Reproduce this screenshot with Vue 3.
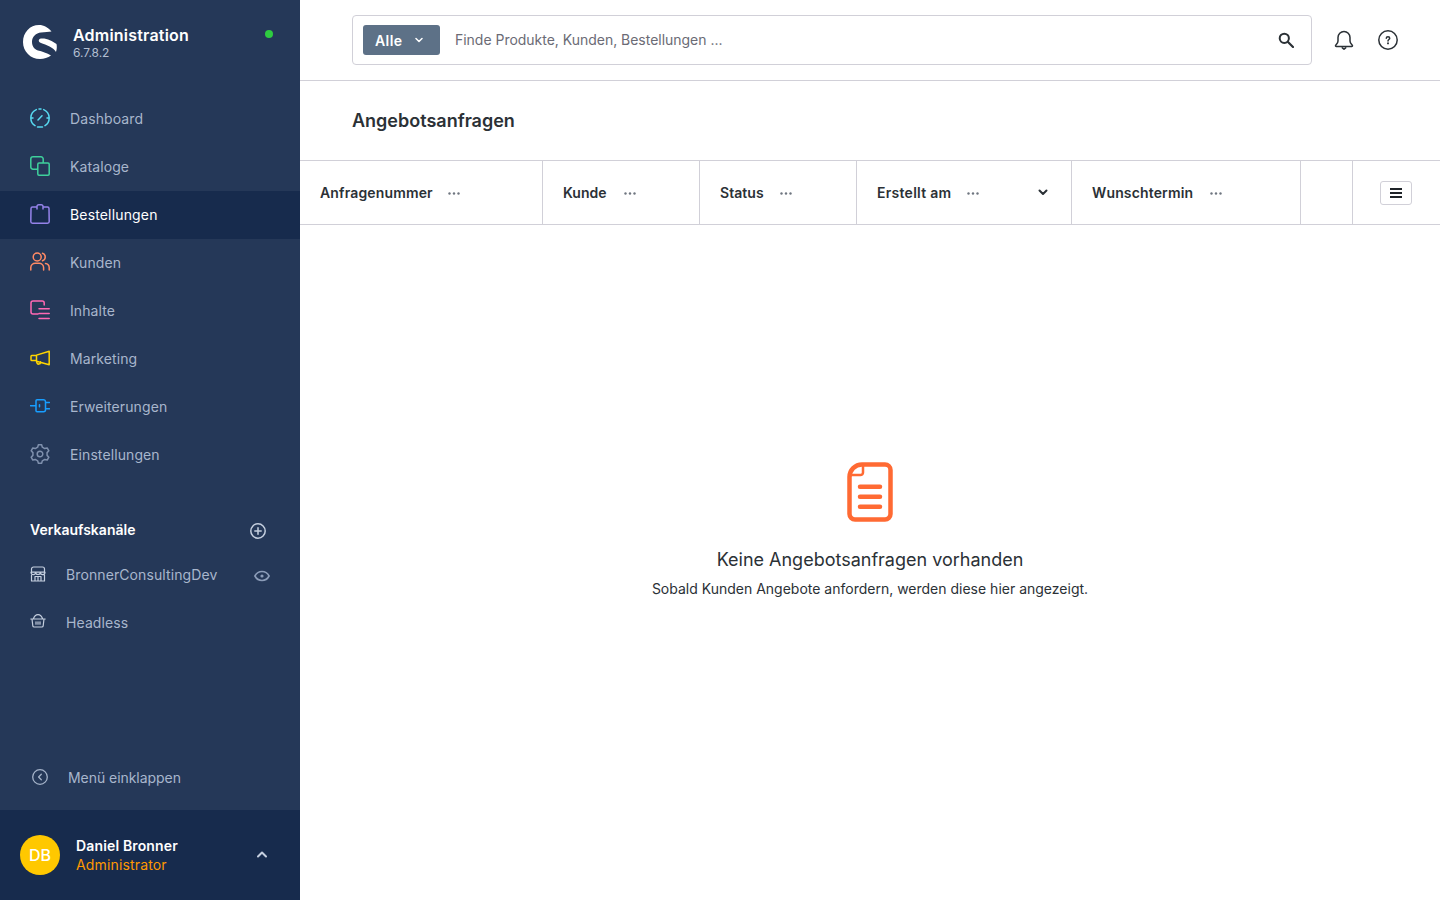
<script setup>
function gearPath() {
  const cx = 10, cy = 10, outer = 9.4, inner = 7.2
  const pts = []
  for (let i = 0; i < 6; i++) {
    const a = -90 + i * 60
    for (const [off, r] of [[-19, inner], [-10, outer], [10, outer], [19, inner]]) {
      const rad = ((a + off) * Math.PI) / 180
      pts.push((cx + r * Math.cos(rad)).toFixed(2) + ' ' + (cy + r * Math.sin(rad)).toFixed(2))
    }
  }
  return 'M' + pts.join('L') + 'ZM10 7.2a2.8 2.8 0 1 1 0 5.6 2.8 2.8 0 0 1 0-5.6Z'
}
const mainNav = [
  { label: 'Dashboard', color: '#57d9f0', d: 'M5 17.700A9.200 9.200 0 0 1 6.300 1.600M9 .9h2M13.700 1.600A9.200 9.200 0 0 1 15 17.700M7.500 18.900h5M8 12l4-4.200M3 10H1M19 10h-2' },
  { label: 'Kataloge', color: '#3fd09c', d: 'M9 .8H3A2.200 2.200 0 0 0 .8 3v8A2.200 2.200 0 0 0 3 13.200h4M13.200 7V3A2.200 2.200 0 0 0 11 .8H9M9 7h9a1.200 1.200 0 0 1 1.200 1.200V18a1.200 1.200 0 0 1-1.200 1.200H9A1.200 1.200 0 0 1 7.800 18V8.200A1.200 1.200 0 0 1 9 7Z' },
  { label: 'Bestellungen', color: '#9583ea', active: true, d: 'M7 3H2.500A1.500 1.500 0 0 0 1 4.500L.8 17.500A1.700 1.700 0 0 0 2.500 19.200h15a1.700 1.700 0 0 0 1.700-1.700L19 4.500A1.500 1.500 0 0 0 17.500 3H13M7 5V2.500A1.700 1.700 0 0 1 8.700.8h2.600A1.700 1.700 0 0 1 13 2.500V5' },
  { label: 'Kunden', color: '#ff8a65', d: 'M7.200 1a4 4 0 1 1 0 8 4 4 0 0 1 0-8ZM.8 18v-2.500a4.500 4.500 0 0 1 4.500-4.300h3.800a4.500 4.500 0 0 1 4.500 4.300V18M12.500 1.200a4 4 0 0 1 0 7.600M15.500 11.500a4.300 4.300 0 0 1 3.700 4V18' },
  { label: 'Inhalte', color: '#ff68b4', d: 'M14.200 5V3A2 2 0 0 0 12.200 1H3A2 2 0 0 0 1 3v9a2 2 0 0 0 2 2h5M9 8.800h10.200M9 13.500h10.200M9 18.500h10.200' },
  { label: 'Marketing', color: '#ffd500', d: 'M6.500 7.100 19.200 3.300v13.400L6.500 13.300ZM6.500 7.500H1.800A.8.8 0 0 0 1 8.300v3.400a.8.8 0 0 0 .8.8h4.700M6.500 13.300l.4 1.500a1.900 1.900 0 0 0 3.700-.4v-.6' },
  { label: 'Erweiterungen', color: '#189eff', d: 'M7 3.700h6.500a2 2 0 0 1 2 2v8a2 2 0 0 1-2 2H7a1 1 0 0 1-1-1v-10a1 1 0 0 1 1-1ZM.5 9.700H6M15.500 6.500h4M15.500 12.800h4M9.500 8.700v2' },
  { label: 'Einstellungen', color: '#7f90ad', d: gearPath() }
]
const channels = [
  { label: 'BronnerConsultingDev', eye: true, d: 'M1.500 6.500V3A2 2 0 0 1 3.500 1h9a2 2 0 0 1 2 2v3.500M1 6.200a2.300 2.300 0 0 0 4.700 0 2.300 2.300 0 0 0 4.600 0 2.300 2.300 0 0 0 4.700 0H1ZM1.500 9v6h13V9M5 15v-4.500h6V15M8 10.500V15' },
  { label: 'Headless', d: 'M.8 5h14.400M2 5l.8 6.800A1.400 1.400 0 0 0 4.200 13h7.600a1.400 1.400 0 0 0 1.400-1.200L14 5M3.300 5C4.300 2 6 .7 8 .7s3.700 1.300 4.700 4.300M6 7.800v2.400M8 7.800v2.400M10 7.800v2.400' }
]
const columns = [
  { label: 'Anfragenummer', w: 243, ls: 0.15, dm: 15 },
  { label: 'Kunde', w: 157, ls: 0, dm: 17 },
  { label: 'Status', w: 157, ls: 0.05, dm: 16 },
  { label: 'Erstellt am', w: 215, ls: 0.27, dm: 16, sort: true },
  { label: 'Wunschtermin', w: 229, ls: 0.15, dm: 17 }
]
</script>

<template>
  <div class="app">
    <aside class="sidebar">
      <div class="brand">
        <svg class="logo" width="34" height="34" viewBox="0 0 34 34">
          <path fill="#fff" d="M28.500 6.500C25 2.500 21 0 16 0 7 0 0 7.500 0 17s7.500 17 17 17c4 0 8-1.200 11-3.500-4-2.500-9-4-13-5-3.500-1-6-4.500-6-8.500 0-5.500 4-9 9-9.500 4-.4 7.500-.5 10.500-1Z" />
          <path fill="#fff" d="M18 13.500c-3 .5-3 3.500 0 4.500 5 1.500 13 5 15 9 1-3 1-6 .5-8-4.500-3-9.500-6-15.500-5.500Z" />
        </svg>
        <div class="brand-text">
          <div class="brand-title">Administration</div>
          <div class="brand-version">6.7.8.2</div>
        </div>
        <span class="status-dot"></span>
      </div>

      <nav class="nav">
        <a v-for="item in mainNav" :key="item.label" class="nav-item" :class="{ active: item.active }">
          <svg width="20" height="20" viewBox="0 0 20 20" fill="none" :stroke="item.color" stroke-width="1.500" stroke-linecap="round" stroke-linejoin="round"><path :d="item.d" /></svg>
          <span>{{ item.label }}</span>
        </a>
      </nav>

      <div class="section-head">
        <span>Verkaufskanäle</span>
        <svg width="16" height="16" viewBox="0 0 16 16" fill="none" stroke="#c5cfdf" stroke-width="1.500" stroke-linecap="round"><circle cx="8" cy="8" r="7.200" /><path d="M8 4.800v6.400M4.800 8h6.400" /></svg>
      </div>

      <a v-for="c in channels" :key="c.label" class="channel">
        <svg width="16" height="16" viewBox="0 0 16 16" fill="none" stroke="#c5cfdf" stroke-width="1.200" stroke-linecap="round" stroke-linejoin="round"><path :d="c.d" /></svg>
        <span class="channel-label">{{ c.label }}</span>
        <svg v-if="c.eye" class="eye" width="16" height="12" viewBox="0 0 16 12" fill="none" stroke="#8b9cb8" stroke-width="1.600"><path d="M.9 6C2.500 3 5 1.500 8 1.500S13.500 3 15.100 6C13.500 9 11 10.500 8 10.500S2.500 9 .9 6Z" /><circle cx="8" cy="6" r="1.600" fill="#8b9cb8" stroke="none" /></svg>
      </a>

      <div class="spacer"></div>

      <a class="collapse">
        <svg width="16" height="16" viewBox="0 0 16 16" fill="none" stroke="#a5b3c9" stroke-width="1.300" stroke-linecap="round" stroke-linejoin="round"><circle cx="8" cy="8" r="7.300" /><path d="M9.300 5.300 6.600 8l2.700 2.700" /></svg>
        <span>Menü einklappen</span>
      </a>

      <div class="user">
        <div class="avatar">DB</div>
        <div class="user-text">
          <div class="user-name">Daniel Bronner</div>
          <div class="user-role">Administrator</div>
        </div>
        <svg class="user-caret" width="10" height="7" viewBox="0 0 10 7" fill="none" stroke="#c5cfdf" stroke-width="2" stroke-linecap="round" stroke-linejoin="round"><path d="M1 5.500 5 1.500l4 4" /></svg>
      </div>
    </aside>

    <main class="main">
      <header class="topbar">
        <div class="search">
          <button class="search-type">
            <span>Alle</span>
            <svg width="8" height="6" viewBox="0 0 8 6" fill="none" stroke="#fff" stroke-width="1.500" stroke-linecap="round" stroke-linejoin="round"><path d="M1 1.500 4 4.500l3-3" /></svg>
          </button>
          <span class="placeholder">Finde Produkte, Kunden, Bestellungen ...</span>
          <svg class="search-icon" width="16" height="16" viewBox="0 0 16 16" fill="none" stroke="#2b3136" stroke-linecap="round"><circle cx="6.300" cy="6.300" r="4.600" stroke-width="2" /><path d="m10 10 5 5" stroke-width="2.200" /></svg>
        </div>
        <svg class="bell" width="20" height="20" viewBox="0 0 20 20" fill="none" stroke="#2b3136" stroke-width="1.500" stroke-linejoin="round" stroke-linecap="round"><path d="M1.500 15.800c0-1 2.500-2 2.500-4.800V7.500a6 6 0 0 1 12 0V11c0 2.800 2.500 3.800 2.500 4.800 0 .4-.3.700-.7.700H2.200a.7.700 0 0 1-.7-.7Z" /><path d="M8.300 17.800 10 19.200l1.700-1.400" /></svg>
        <svg class="help" width="20" height="20" viewBox="0 0 20 20" fill="none" stroke="#2b3136" stroke-width="1.500" stroke-linecap="round" stroke-linejoin="round"><circle cx="10" cy="10" r="9.200" /><path d="M8.300 8.300C8.300 7.300 9 6.700 10 6.700s1.700.6 1.700 1.500c0 1.300-1.700 1.300-1.700 2.700" stroke-width="1.500" /><path d="M10 13.300v.1" stroke-width="1.900" /></svg>
      </header>

      <div class="page-head">Angebotsanfragen</div>

      <div class="table-head">
        <div v-for="col in columns" :key="col.label" class="th" :style="{ width: col.w + 'px' }">
          <span class="th-label" :style="{ letterSpacing: col.ls + 'px' }">{{ col.label }}</span>
          <svg class="dots" :style="{ marginLeft: col.dm + 'px' }" width="12" height="3" viewBox="0 0 12 3" fill="#6f7680"><circle cx="1.500" cy="1.500" r="1.200" /><circle cx="6" cy="1.500" r="1.200" /><circle cx="10.500" cy="1.500" r="1.200" /></svg>
          <svg v-if="col.sort" class="sort" width="10" height="7" viewBox="0 0 10 7" fill="none" stroke="#2b3136" stroke-width="2" stroke-linecap="round" stroke-linejoin="round"><path d="M1.500 1.500 5 5l3.500-3.500" /></svg>
        </div>
        <div class="th th-empty"></div>
        <div class="th-settings">
          <button class="list-btn">
            <svg width="12" height="10" viewBox="0 0 12 10" fill="none" stroke="#1f2328" stroke-width="2"><path d="M0 1h12M0 5h12M0 9h12" /></svg>
          </button>
        </div>
      </div>

      <section class="empty">
        <svg width="46" height="60" viewBox="0 0 46 60" fill="none" stroke="#ff6a33" stroke-linecap="round" stroke-linejoin="round">
          <path stroke-width="4.500" d="M15 2.500h23a5.500 5.500 0 0 1 5.500 5.500v44a5.500 5.500 0 0 1-5.500 5.500H8A5.500 5.500 0 0 1 2.500 52V15A12.500 12.500 0 0 1 15 2.500Z" />
          <path stroke-width="2.500" d="M3.500 13H13.500a2.500 2.500 0 0 0 2.500-2.500V3" />
          <path stroke-width="4.500" d="M13 24.700h20M13 34.700h20M13 44.700h20" />
        </svg>
        <h2 class="empty-title">Keine Angebotsanfragen vorhanden</h2>
        <p class="empty-text">Sobald Kunden Angebote anfordern, werden diese hier angezeigt.</p>
      </section>
    </main>
  </div>
</template>

<style>
html, body { margin: 0; background: #fff; }
</style>

<style scoped>
.app {
  display: flex;
  width: 1440px;
  height: 900px;
  overflow: hidden;
  font-family: Inter, "Liberation Sans", sans-serif;
  font-size: 14px;
  color: #2b3136;
}
.sidebar {
  width: 300px;
  flex: none;
  display: flex;
  flex-direction: column;
  background: #253858;
}
.brand {
  height: 95px;
  box-sizing: border-box;
  flex: none;
  display: flex;
  align-items: flex-start;
  padding: 25px 27px 0 23px;
}
.logo { flex: none; }
.brand-text { margin-left: 16px; flex: 1; }
.brand-title { font-size: 16px; font-weight: 600; line-height: 20px; letter-spacing: .2px; color: #fff; }
.brand-version { font-size: 12px; line-height: 16px; letter-spacing: -.05px; color: #b3bfd1; }
.status-dot { width: 8px; height: 8px; border-radius: 50%; background: #2ecc40; margin-top: 5px; }
.nav { display: flex; flex-direction: column; }
.nav-item {
  height: 48px;
  display: flex;
  align-items: center;
  gap: 20px;
  padding-left: 30px;
  letter-spacing: .1px;
  color: #a8b6cc;
}
.nav-item svg { flex: none; margin-bottom: 2px; }
.nav-item span { margin-bottom: 2px; }
.nav-item.active { background: #172b4d; color: #fff; letter-spacing: .16px; }
.section-head {
  margin: 27px 0 -4px;
  height: 48px;
  display: flex;
  align-items: center;
  justify-content: space-between;
  padding: 0 34px 0 30px;
  color: #fff;
  font-weight: 600;
}
.section-head span { margin-top: -1px; }
.section-head svg { margin-top: 1px; }
.channel {
  height: 48px;
  display: flex;
  align-items: center;
  padding: 0 30px;
  letter-spacing: .1px;
  color: #a8b6cc;
}
.channel-label { margin-left: 20px; flex: 1; }
.eye { margin-top: 4px; }
.spacer { flex: 1; }
.collapse {
  height: 48px;
  flex: none;
  display: flex;
  align-items: center;
  gap: 20px;
  padding: 0 32px;
  margin-bottom: 9px;
  letter-spacing: -.05px;
  color: #a8b6cc;
}
.user {
  height: 90px;
  flex: none;
  box-sizing: border-box;
  display: flex;
  align-items: center;
  padding: 0 33px 0 20px;
  background: #172b4d;
}
.avatar {
  width: 40px;
  height: 40px;
  flex: none;
  border-radius: 50%;
  background: #ffc800;
  color: #fff;
  font-size: 16px;
  font-weight: 500;
  display: flex;
  align-items: center;
  justify-content: center;
}
.user-text { margin-left: 16px; flex: 1; letter-spacing: .15px; }
.user-name { font-weight: 600; line-height: 19px; color: #fff; }
.user-role { line-height: 19px; color: #ff9800; }
.user-caret { margin-bottom: 1px; }
.main { flex: 1; display: flex; flex-direction: column; min-width: 0; }
.topbar {
  height: 81px;
  flex: none;
  box-sizing: border-box;
  display: flex;
  align-items: center;
  padding: 0 42px 1px 52px;
  border-bottom: 1px solid #d1d0d8;
}
.search {
  width: 960px;
  height: 50px;
  box-sizing: border-box;
  display: flex;
  align-items: center;
  padding: 0 17px 0 10px;
  border: 1px solid #d1d0d8;
  border-radius: 4px;
}
.search-type {
  width: 77px;
  height: 30px;
  display: flex;
  align-items: center;
  gap: 13px;
  padding: 0 0 0 12px;
  border: 0;
  border-radius: 3px;
  background: #5d7187;
  color: #fff;
  font: 600 14px Inter, "Liberation Sans", sans-serif;
  letter-spacing: .4px;
}
.search-type span { margin-top: 2px; }
.placeholder { margin-left: 15px; flex: 1; color: #6b6b75; letter-spacing: -.02px; }
.bell { margin-left: 22px; }
.help { margin-left: 24px; }
.page-head {
  height: 79px;
  flex: none;
  box-sizing: border-box;
  padding-left: 52px;
  display: flex;
  align-items: center;
  font-size: 18px;
  font-weight: 600;
  color: #2b3136;
}
.table-head {
  height: 65px;
  flex: none;
  box-sizing: border-box;
  display: flex;
  border-top: 1px solid #d1d0d8;
  border-bottom: 1px solid #d1d0d8;
}
.th {
  box-sizing: border-box;
  display: flex;
  align-items: center;
  padding: 0 20px;
  border-right: 1px solid #d1d0d8;
}
.th-label { font-weight: 600; color: #2b3136; }
.dots { margin-top: 1px; }
.sort { margin-left: auto; margin-right: 3px; }
.th-empty { width: 52px; padding: 0; }
.th-settings { flex: 1; display: flex; align-items: center; padding-left: 27px; }
.list-btn {
  width: 32px;
  height: 24px;
  display: flex;
  align-items: center;
  justify-content: center;
  padding: 0;
  background: #fff;
  border: 1px solid #d1d0d8;
  border-radius: 3px;
}
.empty {
  flex: 1;
  display: flex;
  flex-direction: column;
  align-items: center;
  padding-top: 237px;
}
.empty-title {
  margin: 26px 0 0;
  font-size: 18px;
  font-weight: 400;
  line-height: 24px;
  color: #2b3136;
}
.empty-text {
  margin: 7px 0 0;
  font-size: 14px;
  line-height: 20px;
  color: #2b3136;
}
</style>
